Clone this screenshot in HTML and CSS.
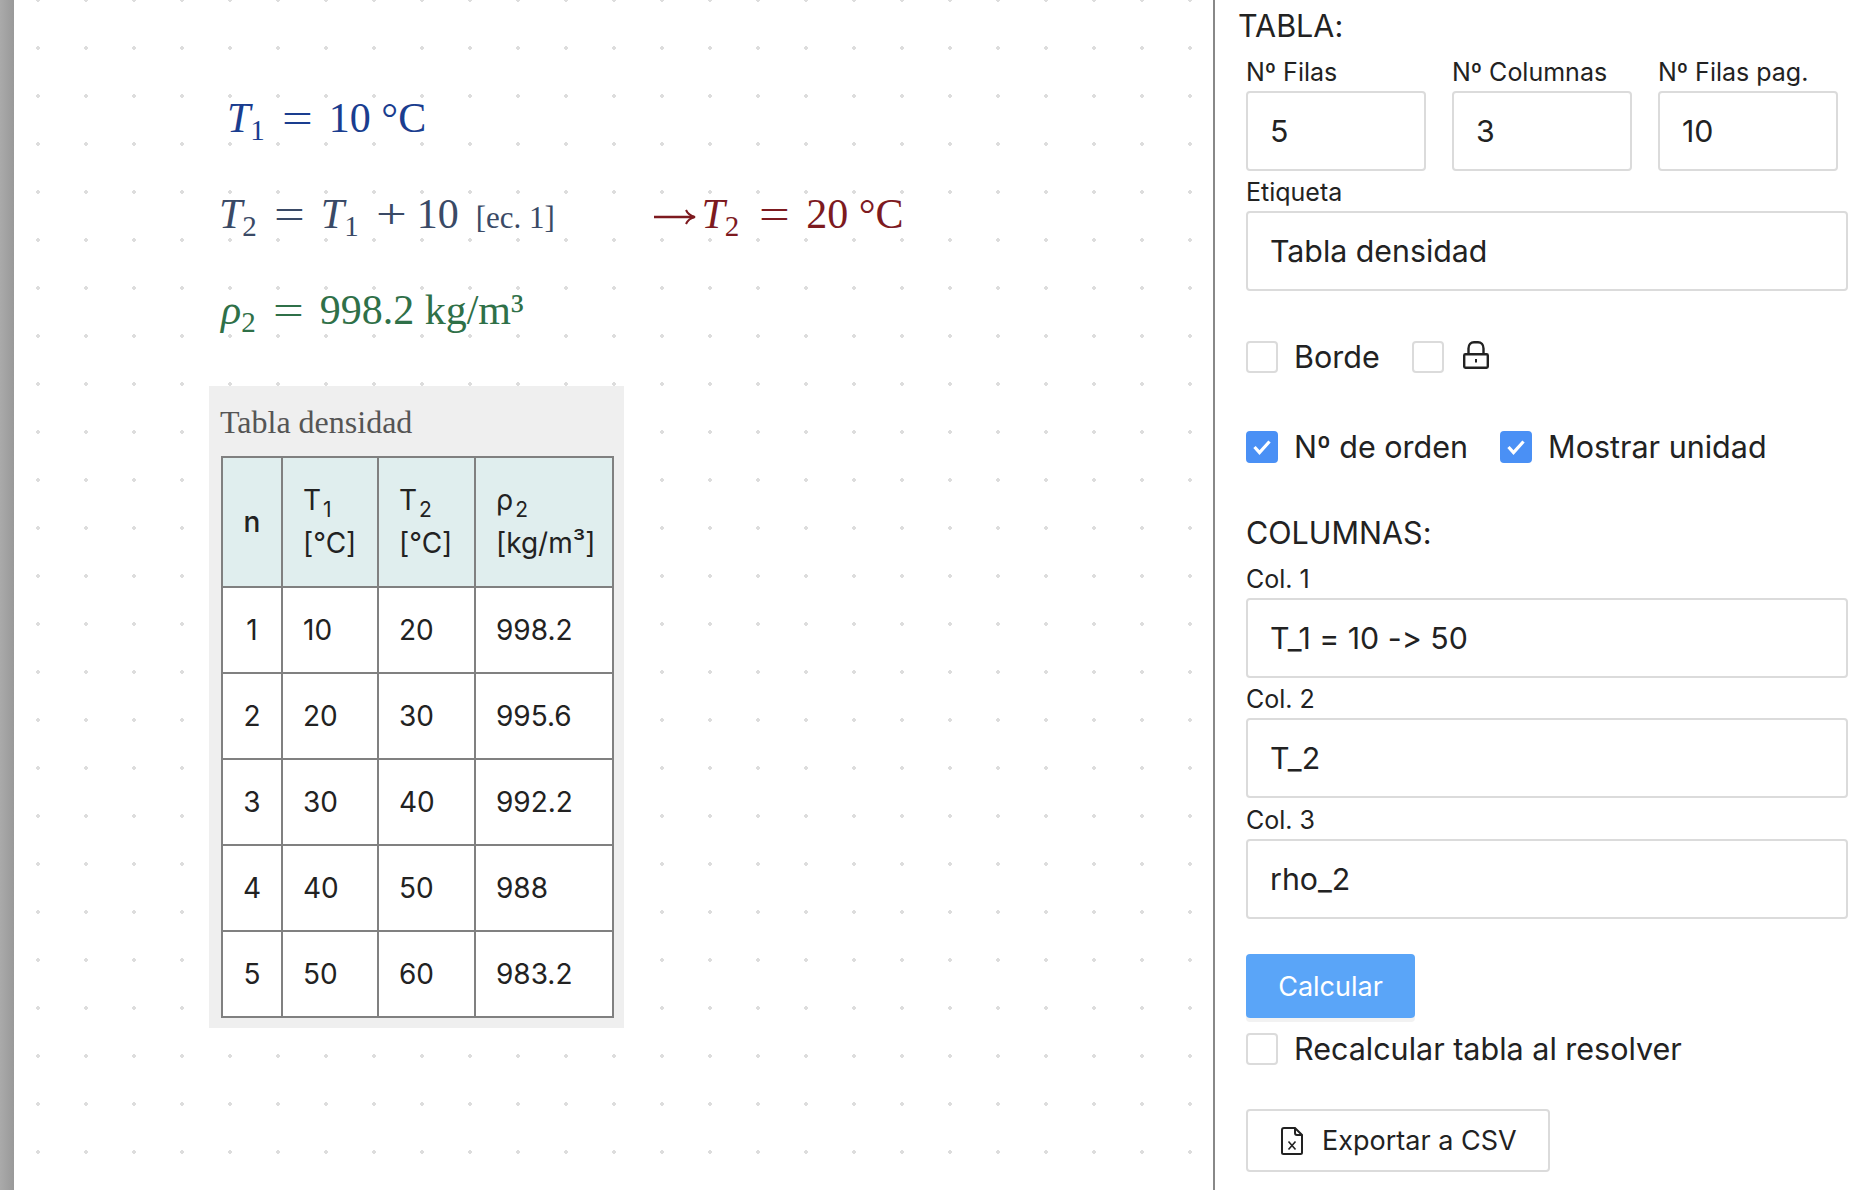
FILE: index.html
```html
<!DOCTYPE html>
<html lang="es">
<head>
  <meta charset="UTF-8">
  <title>Tabla densidad</title>
  <link rel="stylesheet" href="styles.css">
</head>
<body>
  <div class="strip"></div>

  <main class="sheet">
    <div class="math math-blue"><i>T</i><sub>1</sub><span class="eq">=</span>10 °C</div>
    <div class="math math-slate">
      <i>T</i><sub>2</sub><span class="eq">=</span><i>T</i><sub>1</sub><span class="eq eq-plus">+</span>10<small class="ref">[ec. 1]</small>
      <span class="math-red">
        <svg class="arrow" width="42" height="20" viewBox="0 0 42 20" fill="none" stroke="#7d1a1f"><path d="M0 10h40" stroke-width="2.400"/><path d="M32 3c1.500 3.500 4 5.800 9 7-5 1.200-7.500 3.500-9 7" stroke-width="2"/></svg><i>T</i><sub>2</sub><span class="eq eq-result">=</span>20 °C
      </span>
    </div>
    <div class="math math-green"><i class="rho">ρ</i><sub>2</sub><span class="eq">=</span>998.2 kg/m³</div>

    <div class="table-box">
      <div class="table-title">Tabla densidad</div>
      <table class="data">
        <colgroup>
          <col class="col-n"><col class="col-t"><col class="col-t2"><col class="col-rho">
        </colgroup>
        <thead>
          <tr>
            <th class="num">n</th>
            <th>T<sub>1</sub><br>[°C]</th>
            <th>T<sub>2</sub><br>[°C]</th>
            <th>ρ<sub>2</sub><br>[kg/m³]</th>
          </tr>
        </thead>
        <tbody>
          <tr><td class="num">1</td><td>10</td><td>20</td><td>998.2</td></tr>
          <tr><td class="num">2</td><td>20</td><td>30</td><td>995.6</td></tr>
          <tr><td class="num">3</td><td>30</td><td>40</td><td>992.2</td></tr>
          <tr><td class="num">4</td><td>40</td><td>50</td><td>988</td></tr>
          <tr><td class="num">5</td><td>50</td><td>60</td><td>983.2</td></tr>
        </tbody>
      </table>
    </div>
  </main>

  <aside class="panel">
    <h2 class="title title-top">TABLA:</h2>
    <div class="three">
      <div><label class="lbl">Nº Filas</label><input class="input" value="5"></div>
      <div><label class="lbl">Nº Columnas</label><input class="input" value="3"></div>
      <div><label class="lbl">Nº Filas pag.</label><input class="input" value="10"></div>
    </div>
    <div class="field"><label class="lbl">Etiqueta</label><input class="input" value="Tabla densidad"></div>

    <div class="checks checks-borde">
      <label class="check"><span class="box"></span>Borde</label>
      <label class="check"><span class="box"></span>
        <svg class="lock" width="26" height="28" viewBox="0 0 26 28" fill="none" stroke="#222" stroke-width="2.400">
          <rect x="1.200" y="13.200" width="23.600" height="13.600" rx="1.200"/>
          <path d="M5.500 13V7.500C5.500 3.600 8 1.200 11 1.200h4c3 0 5.500 2.400 5.500 6.300V13"/>
          <path d="M13 18v3.500" stroke-width="2"/>
        </svg>
      </label>
    </div>
    <div class="checks checks-orden">
      <label class="check"><span class="box on"><svg width="20" height="16" viewBox="0 0 20 16" fill="none" stroke="#fff" stroke-width="3.200"><path d="M2.500 8l5 5.500 10-11"/></svg></span>Nº de orden</label>
      <label class="check"><span class="box on"><svg width="20" height="16" viewBox="0 0 20 16" fill="none" stroke="#fff" stroke-width="3.200"><path d="M2.500 8l5 5.500 10-11"/></svg></span>Mostrar unidad</label>
    </div>

    <h2 class="title title-cols">COLUMNAS:</h2>
    <div class="field field-first"><label class="lbl">Col. 1</label><input class="input" value="T_1 = 10 -&gt; 50"></div>
    <div class="field"><label class="lbl">Col. 2</label><input class="input" value="T_2"></div>
    <div class="field field-last"><label class="lbl">Col. 3</label><input class="input" value="rho_2"></div>

    <button class="btn-calc" type="button">Calcular</button>
    <div class="checks checks-recalc">
      <label class="check"><span class="box"></span>Recalcular tabla al resolver</label>
    </div>
    <button class="btn-export" type="button">
      <svg width="22" height="28" viewBox="0 0 22 28" fill="none" stroke="#222" stroke-width="2">
        <path d="M3 1h11l7 7v17.500a1.500 1.500 0 0 1-1.500 1.500h-17A1.500 1.500 0 0 1 1 25.500V3a2 2 0 0 1 2-2z"/>
        <path d="M14 1v5a2 2 0 0 0 2 2h5"/>
        <path d="M7.500 14.500l7 8M14.500 14.500l-7 8" stroke-width="1.600"/>
      </svg>
      Exportar a CSV
    </button>
  </aside>
</body>
</html>
```

FILE: styles.css
```css
html, body {
  margin: 0;
  height: 100%;
}
body {
  display: flex;
  height: 100vh;
  overflow: hidden;
  background: #fff;
  color: #222;
  font-family: Inter, "Noto Sans", sans-serif;
  font-variant-ligatures: none;
  font-feature-settings: "calt" 0;
}
.strip {
  width: 14px;
  flex: none;
  background: linear-gradient(to right, #aaa, #999);
}
.sheet {
  flex: 1;
  min-width: 0;
  padding: 86px 0 0 205px;
  background-color: #fff;
  background-image: radial-gradient(circle, #ddd 1.6px, transparent 2px);
  background-size: 48px 48px;
  background-position: 0 -24px;
}

/* ecuaciones */
.math {
  height: 96px;
  line-height: 64px;
  font-family: "Liberation Serif", serif;
  font-size: 42px;
  white-space: nowrap;
}
.math i {
  font-style: italic;
}
.math sub {
  font-size: 29px;
  line-height: 0;
  vertical-align: -8px;
}
.eq {
  display: inline-block;
  width: 31px;
  margin: 0 16px 0 17px;
  text-align: center;
  transform: scaleX(1.3);
}
.eq-plus {
  margin: 0 10px 0 17px;
}
.eq-result {
  margin-left: 20px;
}
.ref {
  margin-left: 17px;
  font-size: 31px;
}
.arrow {
  margin: 0 5px 0 89px;
  vertical-align: 1px;
}
.rho {
  margin-left: 2px;
}
.math-blue { color: #1a3d8f; margin-left: 8px; }
.math-slate { color: #3a4a66; }
.math-red { color: #7d1a1f; }
.math-green { color: #2f7048; }

/* tabla */
.table-box {
  width: 415px;
  height: 642px;
  margin: 12px 0 0 -10px;
  padding: 0 10px 0 11px;
  box-sizing: border-box;
  background: #efefef;
}
.table-title {
  height: 70px;
  line-height: 72px;
  font-family: "Liberation Serif", serif;
  font-size: 32px;
  color: #555;
}
.data {
  width: 393px;
  margin-left: 1px;
  table-layout: fixed;
  border-collapse: collapse;
  background: #fff;
  font-size: 28px;
  line-height: 43px;
}
.col-n { width: 60px; }
.col-t { width: 96px; }
.col-t2 { width: 97px; }
.col-rho { width: 138px; }
.data th, .data td {
  padding: 0 0 0 20px;
  border: 2px solid #808080;
  text-align: left;
  white-space: nowrap;
}
.data th {
  height: 128px;
  background: #e0eeee;
  font-weight: 400;
}
.data td {
  height: 84px;
}
.data .num {
  padding: 0;
  text-align: center;
}
.data th.num {
  font-weight: 500;
}
.data sub {
  font-size: 21px;
  line-height: 0;
  margin-left: 2px;
}

/* panel derecho */
.panel {
  width: 661px;
  flex: none;
  box-sizing: border-box;
  border-left: 2px solid #888;
  padding: 6px 26px 0 31px;
}
.title {
  margin: 0;
  font-size: 30.500px;
  font-weight: 400;
  line-height: 40px;
}
.title-top { margin-left: -8px; }
.title-cols { margin-top: 50px; }
.three {
  display: grid;
  grid-template-columns: repeat(3, 180px);
  gap: 26px;
  margin-top: 11px;
}
.field { margin-top: 6px; }
.field-first { margin-top: 11px; }
.field-last { margin-top: 7px; }
.lbl {
  display: block;
  margin-bottom: 4px;
  font-size: 25px;
  line-height: 30px;
}
.input {
  display: block;
  width: 100%;
  height: 80px;
  box-sizing: border-box;
  padding: 0 22px;
  border: 2px solid #dbdbdb;
  border-radius: 4px;
  font-family: inherit;
  font-size: 30.300px;
  font-variant-ligatures: none;
  font-feature-settings: "calt" 0;
  color: #222;
  background: #fff;
}
.checks {
  display: flex;
  gap: 32px;
  font-size: 30.500px;
  line-height: 32px;
}
.checks-borde { margin-top: 50px; }
.checks-orden { margin-top: 58px; }
.checks-recalc { margin-top: 15px; }
.check {
  display: flex;
  align-items: center;
  gap: 16px;
}
.box {
  display: flex;
  align-items: center;
  justify-content: center;
  width: 32px;
  height: 32px;
  box-sizing: border-box;
  border: 2px solid #dbdbdb;
  border-radius: 4px;
}
.box.on {
  border-color: #4a90f5;
  background: #4a90f5;
}
.lock {
  margin: -4px 0 0 3px;
}
.btn-calc {
  display: block;
  width: 169px;
  height: 64px;
  margin-top: 35px;
  border: none;
  border-radius: 4px;
  background: #5aa5f8;
  box-shadow: 0 4px 0 #f2f2f2;
  color: #fff;
  font-family: inherit;
  font-size: 27px;
}
.btn-export {
  display: flex;
  align-items: center;
  gap: 19px;
  height: 63px;
  width: 304px;
  margin-top: 44px;
  padding: 0 0 0 33px;
  box-sizing: border-box;
  border: 2px solid #dbdbdb;
  border-radius: 4px;
  background: #fff;
  color: #222;
  font-family: inherit;
  font-size: 27px;
}
```
